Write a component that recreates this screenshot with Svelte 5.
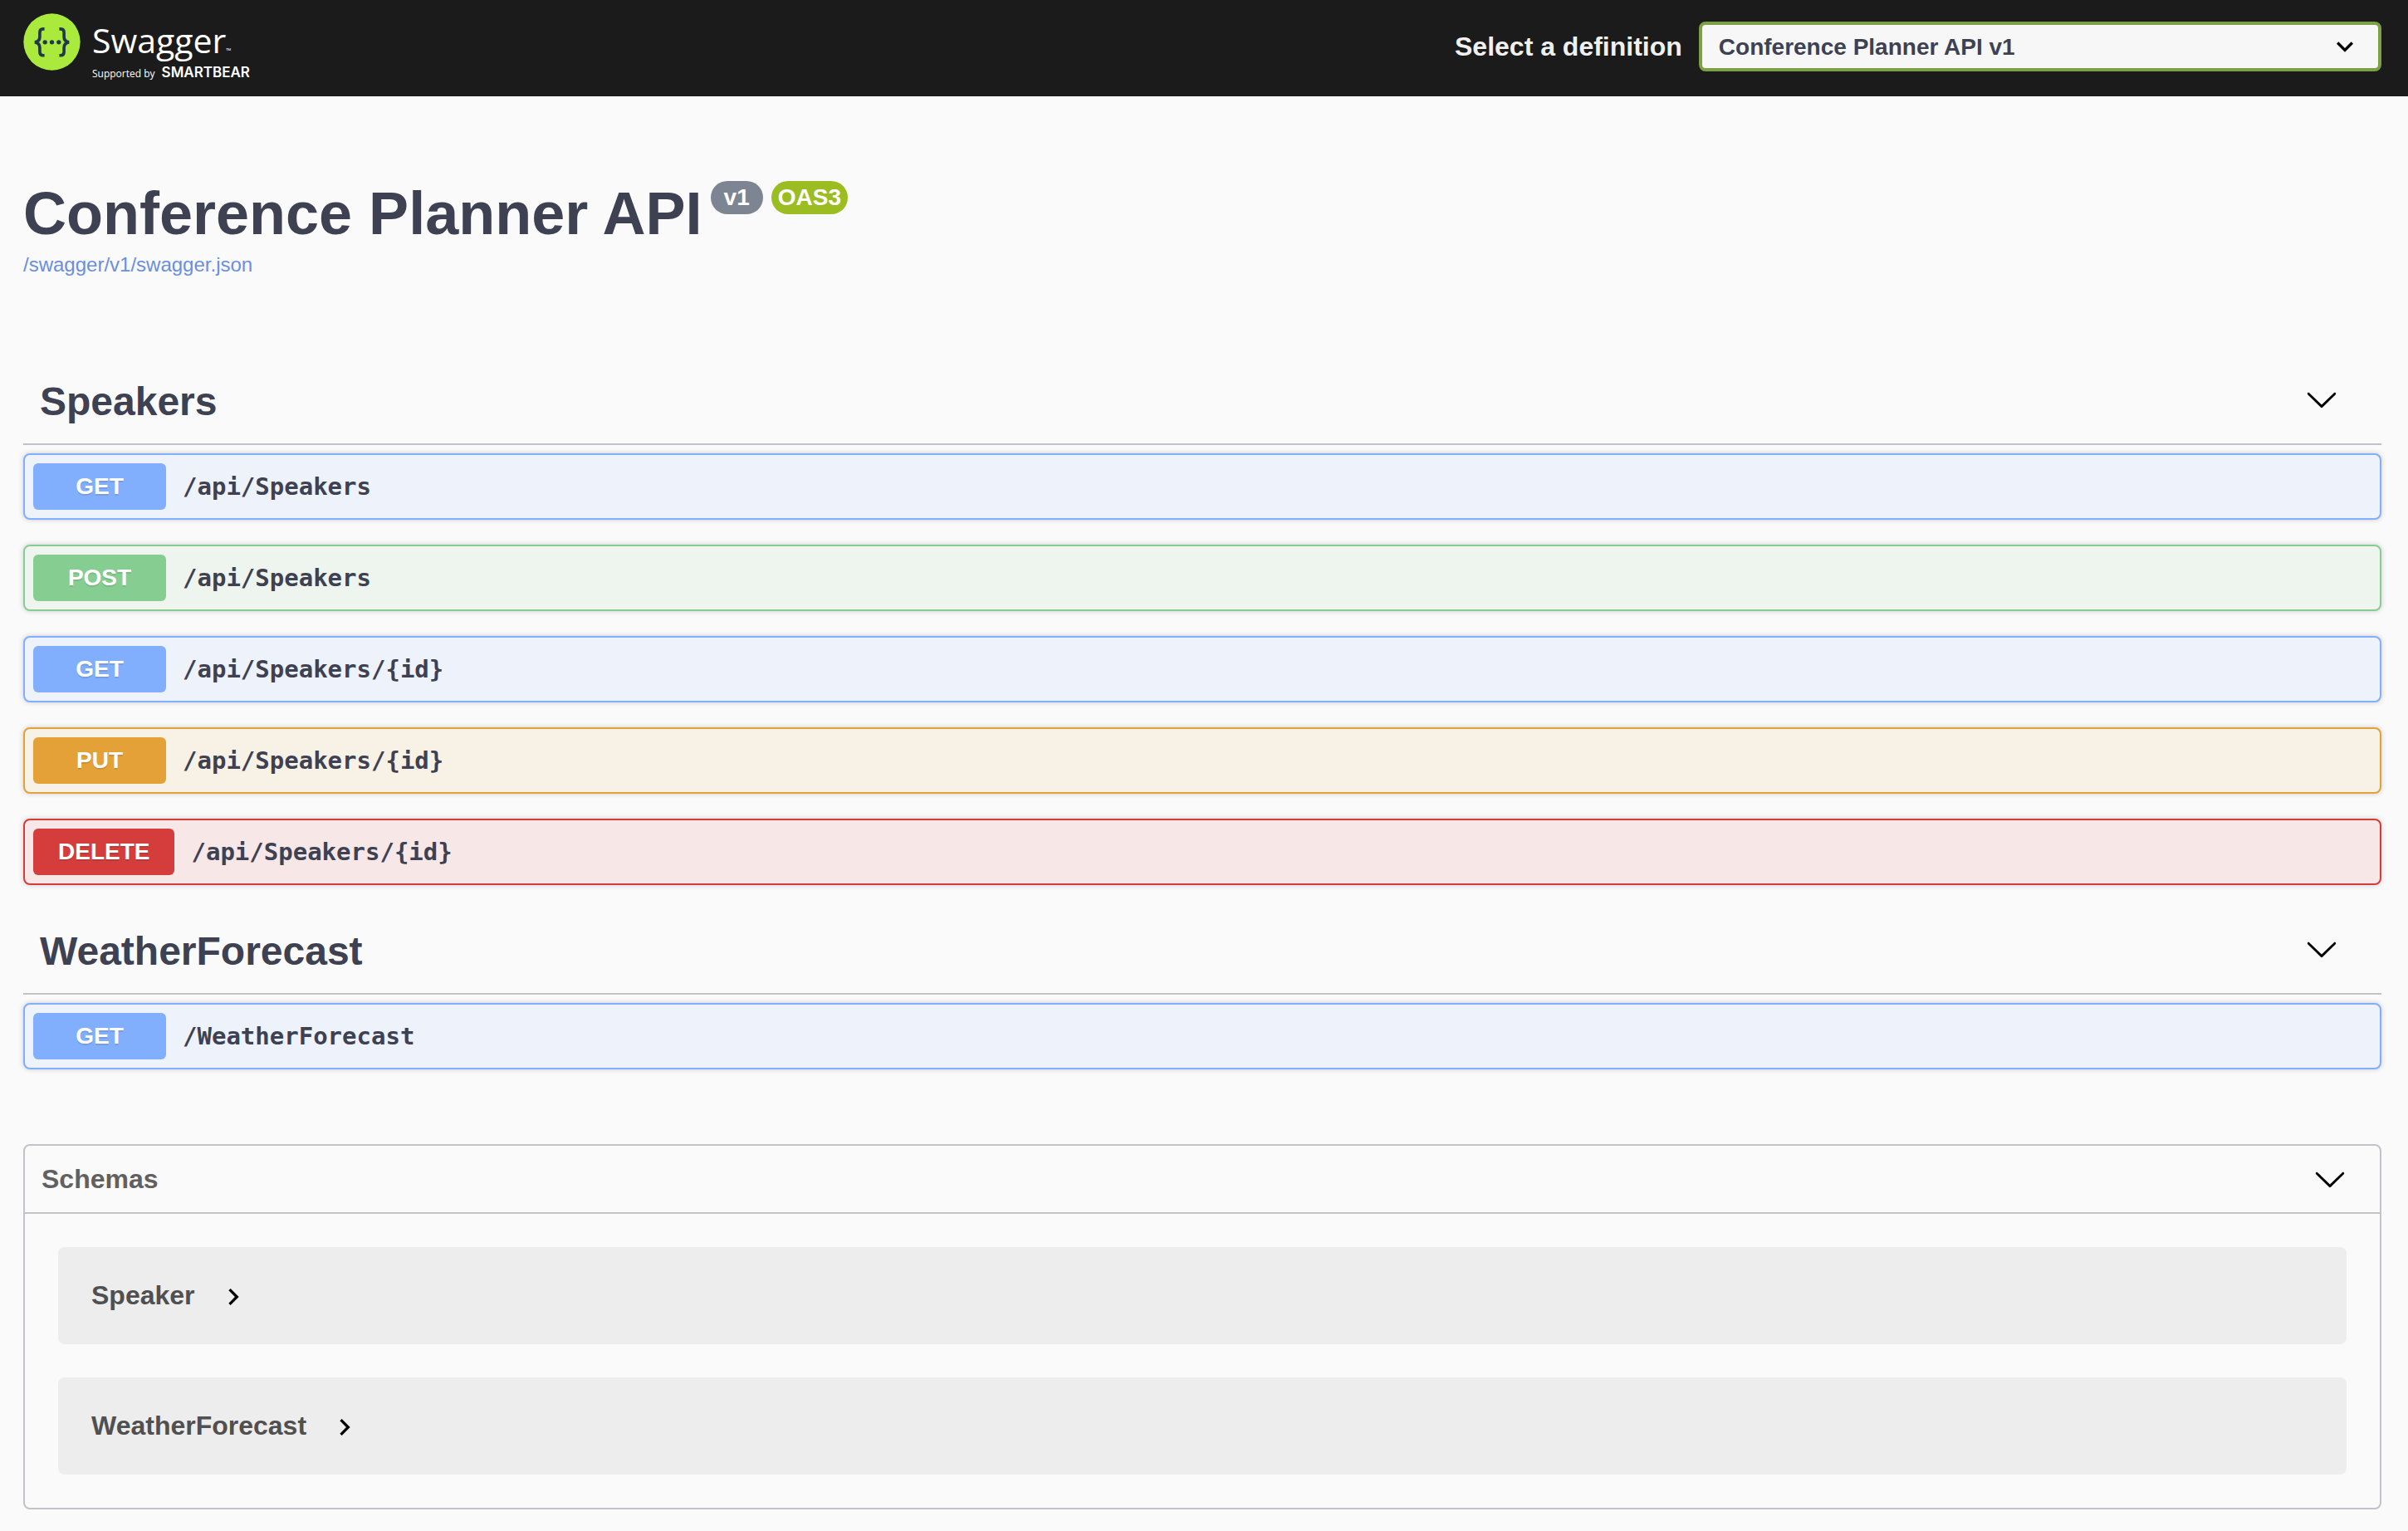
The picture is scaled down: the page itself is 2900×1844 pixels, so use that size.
<script>
  const definitions = ['Conference Planner API v1'];
  let definition = $state(definitions[0]);

  const tags = $state([
    {
      name: 'Speakers',
      open: true,
      operations: [
        { method: 'get', path: '/api/Speakers' },
        { method: 'post', path: '/api/Speakers' },
        { method: 'get', path: '/api/Speakers/{id}' },
        { method: 'put', path: '/api/Speakers/{id}' },
        { method: 'delete', path: '/api/Speakers/{id}' }
      ]
    },
    {
      name: 'WeatherForecast',
      open: true,
      operations: [{ method: 'get', path: '/WeatherForecast' }]
    }
  ]);

  const schemas = ['Speaker', 'WeatherForecast'];
  let schemasOpen = $state(true);
</script>

{#snippet chevron()}
  <svg class="chevron" viewBox="0 0 20 20" aria-hidden="true">
    <path d="M17.418 6.109c.272-.268.709-.268.979 0s.271.701 0 .969l-7.908 7.83c-.27.268-.707.268-.979 0l-7.908-7.83c-.27-.268-.27-.701 0-.969.271-.268.709-.268.979 0L10 13.25l7.418-7.141z" />
  </svg>
{/snippet}

<header class="topbar">
  <a class="brand" href="#top" aria-label="Swagger, supported by SmartBear">
    <svg class="mark" viewBox="0 0 208 208" aria-hidden="true">
      <circle cx="104" cy="104" r="103" fill="#a9ea3d" />
      <g fill="none" stroke="#20394a" stroke-width="11">
        <path d="M77 57h-5c-9 0-12 5-12 13v15c0 12-5 18-18 20c13 2 18 8 18 20v15c0 8 3 13 12 13h5" />
        <path d="M131 57h5c9 0 12 5 12 13v15c0 12 5 18 18 20c-13 2-18 8-18 20v15c0 8-3 13-12 13h-5" />
      </g>
      <g fill="#20394a">
        <circle cx="79" cy="105" r="8" />
        <circle cx="104" cy="105" r="8" />
        <circle cx="129" cy="105" r="8" />
      </g>
    </svg>
    <span class="words">
      <span class="name">Swagger<small>™</small></span>
      <span class="support">Supported by <b>SMARTBEAR</b></span>
    </span>
  </a>
  <div class="picker">
    <label for="definition">Select a definition</label>
    <span class="select">
      <select id="definition" bind:value={definition}>
        {#each definitions as name}
          <option>{name}</option>
        {/each}
      </select>
      <svg class="down" viewBox="0 0 24 24" aria-hidden="true">
        <path d="M6 10l1.410-1.410L12 13.170l4.590-4.580L18 10l-6 6z" />
      </svg>
    </span>
  </div>
</header>

<main>
  <section class="info">
    <div class="title">
      <h1>Conference Planner API</h1>
      <span class="pill version">v1</span>
      <span class="pill oas">OAS3</span>
    </div>
    <a href="/swagger/v1/swagger.json">/swagger/v1/swagger.json</a>
  </section>

  <div class="tags">
    {#each tags as tag}
      <section class="tag">
        <header>
          <h2>{tag.name}</h2>
          <button aria-label="Toggle {tag.name}" aria-expanded={tag.open} onclick={() => (tag.open = !tag.open)}>
            {@render chevron()}
          </button>
        </header>
        {#if tag.open}
          <div class="operations">
            {#each tag.operations as op}
              <button class="operation {op.method}">
                <span class="method">{op.method.toUpperCase()}</span>
                <span class="path">{op.path}</span>
              </button>
            {/each}
          </div>
        {/if}
      </section>
    {/each}
  </div>

  <section class="schemas">
    <header>
      <h3>Schemas</h3>
      <button aria-label="Toggle schemas" aria-expanded={schemasOpen} onclick={() => (schemasOpen = !schemasOpen)}>
        {@render chevron()}
      </button>
    </header>
    {#if schemasOpen}
      <div class="models">
        {#each schemas as schema}
          <div class="model">
            <button>
              <span>{schema}</span>
              <svg viewBox="0 0 24 24" aria-hidden="true">
                <path d="M10 6L8.590 7.410 13.170 12l-4.580 4.590L10 18l6-6z" />
              </svg>
            </button>
          </div>
        {/each}
      </div>
    {/if}
  </section>
</main>

<style>
  :global(body) {
    background: #fafafa;
    color: #3e4152;
    font-family: 'Liberation Sans', Arial, sans-serif;
  }

  h1,
  h2,
  h3 {
    margin: 0;
  }

  button {
    padding: 0;
    border: 0;
    background: none;
    color: inherit;
    font: inherit;
    text-align: left;
    cursor: pointer;
  }

  svg {
    display: block;
    flex: none;
  }

  .topbar {
    display: flex;
    align-items: flex-start;
    justify-content: space-between;
    padding: 16px 32px 16px 28px;
    background: #1b1b1b;
  }

  .brand {
    display: flex;
    align-items: flex-start;
    gap: 14px;
    color: #fff;
    font-family: 'Open Sans', sans-serif;
    text-decoration: none;
  }

  .mark {
    width: 69px;
    height: 69px;
  }

  .words {
    display: flex;
    flex-direction: column;
    gap: 4px;
    padding-top: 6px;
  }

  .name {
    font-size: 41px;
    line-height: 52px;
  }

  .name small {
    font-size: 8px;
    line-height: 8px;
  }

  .support {
    display: flex;
    align-items: baseline;
    gap: 8px;
    font-size: 12px;
    line-height: 22px;
    white-space: nowrap;
  }

  .support b {
    font-family: Inter, sans-serif;
    font-size: 17px;
    font-weight: 600;
    line-height: 16px;
  }

  .picker {
    display: flex;
    flex: 0 1 1116px;
    align-items: center;
    gap: 20px;
    padding-top: 10px;
    color: #f0f0f0;
    font-size: 32px;
    font-weight: 700;
    white-space: nowrap;
  }

  .select {
    display: grid;
    flex: 1;
    align-items: center;
  }

  .select select,
  .down {
    grid-area: 1 / 1;
  }

  .select select {
    width: 100%;
    height: 60px;
    padding: 0 80px 0 20px;
    border: 4px solid #7ba144;
    border-radius: 8px;
    appearance: none;
    background: #f7f7f7;
    color: #3e4152;
    font: 700 28px 'Liberation Sans', Arial, sans-serif;
  }

  .down {
    justify-self: end;
    width: 40px;
    height: 40px;
    margin-right: 24px;
    pointer-events: none;
  }

  main {
    padding: 100px 32px 26px 28px;
  }

  .title {
    display: flex;
    align-items: flex-start;
    gap: 10px;
  }

  h1 {
    font-size: 72px;
    line-height: 82px;
  }

  .pill {
    margin-top: 2px;
    padding: 0 8px;
    border-radius: 20px;
    color: #fff;
    font-size: 28px;
    font-weight: 700;
    line-height: 40px;
  }

  .version {
    padding: 0 16px;
    background: #7d8492;
  }

  .oas {
    background: #9bbd22;
  }

  .info a {
    display: inline-block;
    margin-top: 6px;
    color: #6a8ee0;
    font-size: 24px;
    line-height: 30px;
    text-decoration: none;
  }

  .tags {
    display: flex;
    flex-direction: column;
    gap: 32px;
    margin-top: 102px;
  }

  .tag header {
    display: flex;
    align-items: flex-start;
    justify-content: space-between;
    padding: 20px 20px 22px;
    border-bottom: 2px solid #c2c3c9;
  }

  h2 {
    font-size: 48px;
    line-height: 56px;
  }

  .tag header button {
    padding: 5px 32px;
  }

  .chevron {
    width: 40px;
    height: 40px;
    fill: #000;
  }

  .operations {
    display: flex;
    flex-direction: column;
    gap: 30px;
    padding-top: 10px;
  }

  .operation {
    display: flex;
    align-items: center;
    gap: 20px;
    padding: 10px;
    border: 2px solid var(--accent);
    border-radius: 8px;
    background: var(--tint);
    box-shadow: 0 0 6px rgba(0, 0, 0, 0.19);
  }

  .get {
    --accent: #81aefd;
    --tint: #edf2fb;
  }

  .post {
    --accent: #86cd91;
    --tint: #eef5ee;
  }

  .put {
    --accent: #e3a138;
    --tint: #f8f1e6;
  }

  .delete {
    --accent: #d43d3c;
    --tint: #f7e7e6;
  }

  .method {
    box-sizing: border-box;
    min-width: 160px;
    padding: 12px 30px;
    border-radius: 6px;
    background: var(--accent);
    color: #fff;
    font-size: 28px;
    font-weight: 700;
    line-height: 32px;
    text-align: center;
    text-shadow: 0 2px 0 rgba(0, 0, 0, 0.1);
  }

  .path {
    font-family: 'DejaVu Sans Mono', monospace;
    font-size: 29px;
    font-weight: 700;
    line-height: 32px;
  }

  .schemas {
    margin-top: 90px;
    border: 2px solid #c2c3c9;
    border-radius: 8px;
  }

  .schemas header {
    display: flex;
    align-items: center;
    justify-content: space-between;
    padding: 20px 40px 20px 20px;
  }

  h3 {
    color: #606060;
    font-size: 32px;
    line-height: 40px;
  }

  .models {
    display: flex;
    flex-direction: column;
    gap: 40px;
    padding: 40px;
    border-top: 2px solid #c2c3c9;
  }

  .model {
    padding: 40px;
    border-radius: 8px;
    background: #ededed;
  }

  .model button {
    display: flex;
    align-items: flex-end;
    gap: 26px;
    color: #505050;
    font-size: 32px;
    font-weight: 700;
    line-height: 37px;
  }

  .model svg {
    width: 40px;
    height: 40px;
    margin: -3px 0;
  }
</style>
